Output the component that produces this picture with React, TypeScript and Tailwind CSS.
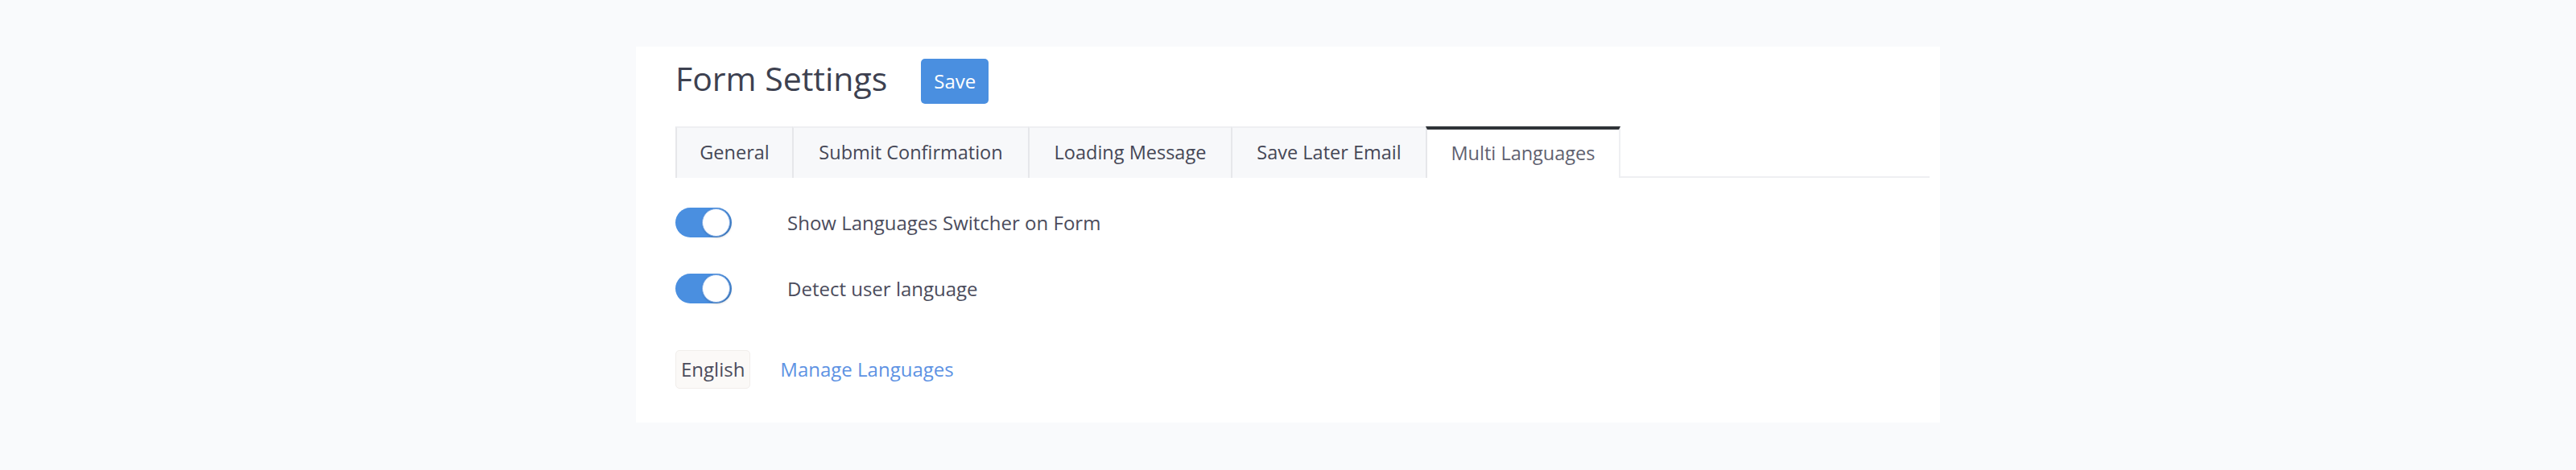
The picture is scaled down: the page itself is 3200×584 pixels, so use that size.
import React, { useState } from "react";

const tabs = [
  { label: "General", w: "w-[145px]" },
  { label: "Submit Confirmation", w: "w-[293px]" },
  { label: "Loading Message", w: "w-[252px]" },
  { label: "Save Later Email", w: "w-[242px]" },
  { label: "Multi Languages", w: "w-[242px]" },
];

function Toggle({ on, onClick }: { on: boolean; onClick: () => void }) {
  return (
    <button
      onClick={onClick}
      className={`flex items-center w-[70px] h-[37px] rounded-full px-[2px] ${
        on ? "bg-[#4a8fe0] justify-end" : "bg-[#d6dae0] justify-start"
      }`}
    >
      <span className="block w-[35px] h-[35px] rounded-full bg-white border border-[#7aa9e6] shadow-[1px_1px_3px_rgba(0,0,0,0.25)]" />
    </button>
  );
}

export default function App() {
  const [active, setActive] = useState("Multi Languages");
  const [switcher, setSwitcher] = useState(true);
  const [detect, setDetect] = useState(true);

  return (
    <div
      className="w-full h-[584px] bg-[#f9fafc] flex justify-center pt-[58px]"
      style={{ fontFamily: '"Open Sans", "Noto Sans", sans-serif' }}
    >
      <div className="w-[1620px] h-[467px] bg-white pl-[49px] pr-[13px] pt-[15px]">
        {/* Header */}
        <div className="flex items-center h-[56px]">
          <h1 className="text-[41px] leading-none text-[#3d4150] font-normal -mt-[8px]">Form Settings</h1>
          <button className="ml-[42px] h-[56px] w-[84px] rounded-[5px] bg-[#4a8fe0] text-white text-[24px]">
            Save
          </button>
        </div>

        {/* Tabs */}
        <div className="mt-[28px] flex h-[64px] border-b-2 border-[#eeeff2]">
          {tabs.map((t) => {
            const isActive = t.label === active;
            return (
              <button
                key={t.label}
                onClick={() => setActive(t.label)}
                className={`${t.w} h-[64px] text-center text-[23.5px] border-l-2 border-[#e6e7ea] ${
                  isActive
                    ? "bg-white text-[#5f6170] border-t-4 border-t-[#2f3338] border-r-2 border-r-[#eeeff2]"
                    : "bg-[#f7f8fa] text-[#454756] border-t-2 border-t-[#eeeff2]"
                }`}
              >
                {t.label}
              </button>
            );
          })}
        </div>

        {/* Options */}
        <div className="mt-[37px] flex flex-col gap-[45px]">
          <div className="flex items-center gap-[69px]">
            <Toggle on={switcher} onClick={() => setSwitcher(!switcher)} />
            <span className="text-[24px] text-[#4b4c5c]">Show Languages Switcher on Form</span>
          </div>
          <div className="flex items-center gap-[69px]">
            <Toggle on={detect} onClick={() => setDetect(!detect)} />
            <span className="text-[24px] text-[#4b4c5c]">Detect user language</span>
          </div>
        </div>

        {/* Languages */}
        <div className="mt-[58px] flex items-center gap-[37px]">
          <span className="h-[48px] px-[6px] flex items-center rounded-[5px] bg-[#fbf9f7] border border-[#f1eeeb] text-[24px] text-[#4b4c5c]">
            English
          </span>
          <a href="#" className="text-[24px] text-[#5d92e3]">
            Manage Languages
          </a>
        </div>
      </div>
    </div>
  );
}
